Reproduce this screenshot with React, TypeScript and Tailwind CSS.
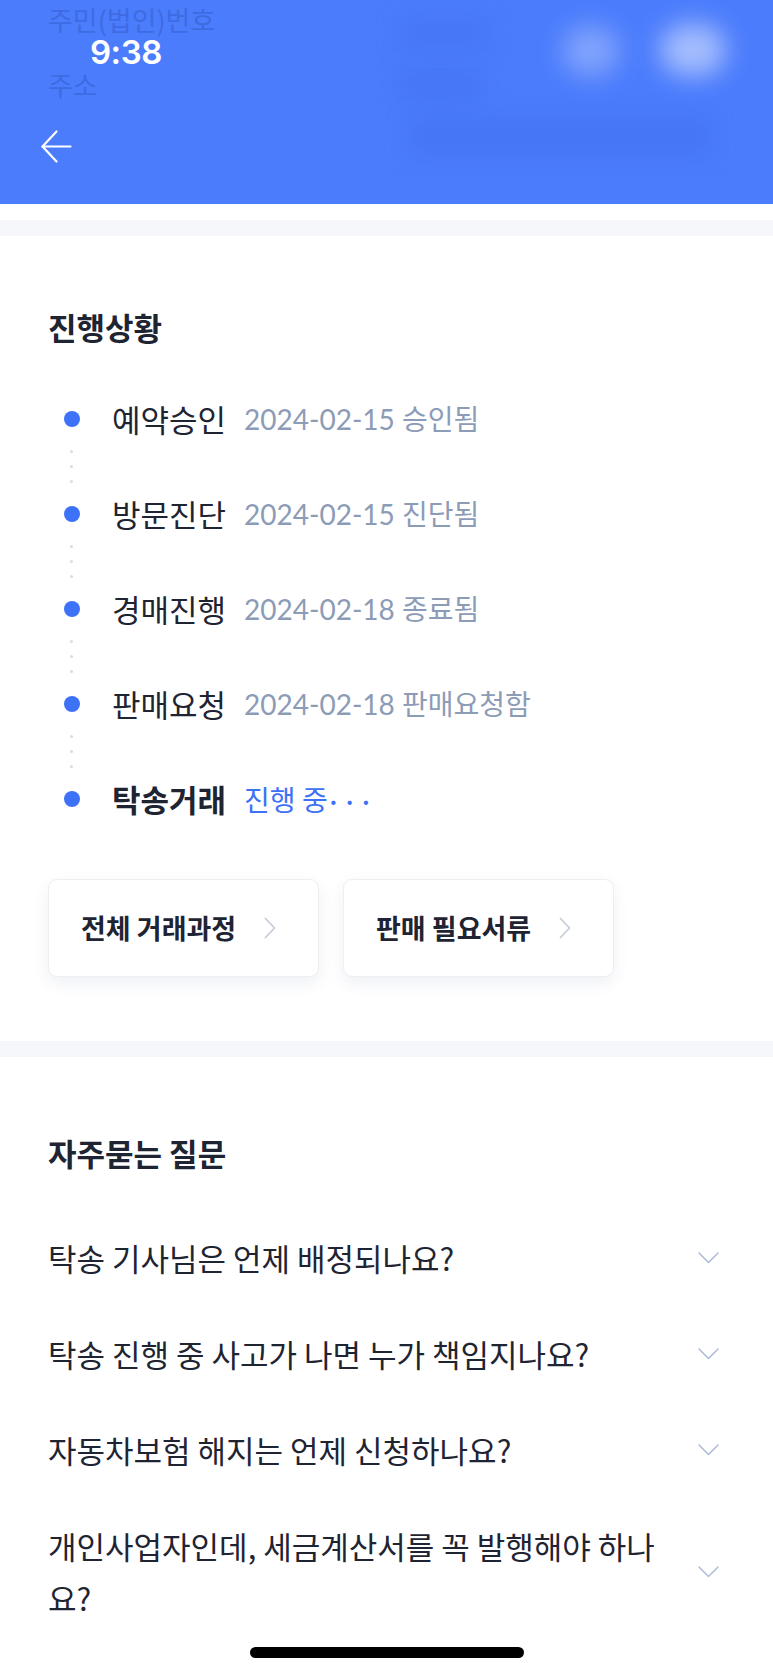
const steps = [
  { label: "예약승인", note: "2024-02-15 승인됨" },
  { label: "방문진단", note: "2024-02-15 진단됨" },
  { label: "경매진행", note: "2024-02-18 종료됨" },
  { label: "판매요청", note: "2024-02-18 판매요청함" },
  { label: "탁송거래", note: "진행 중", current: true },
];

const faqs = [
  "탁송 기사님은 언제 배정되나요?",
  "탁송 진행 중 사고가 나면 누가 책임지나요?",
  "자동차보험 해지는 언제 신청하나요?",
  "개인사업자인데, 세금계산서를 꼭 발행해야 하나요?",
];

function Header() {
  return (
    <header className="relative h-[204px] bg-[#4b7cfc] overflow-hidden">
      <div className="px-[48px] pt-[3px] text-[27px] leading-[34px] text-[#3e6be2]">
        <div>주민(법인)번호</div>
        <div className="mt-[31px]">주소</div>
      </div>

      {/* blurred values */}
      <div className="absolute left-[400px] top-[22px] w-[90px] h-[22px] rounded-md bg-[#3f6ae6]/40 blur-md" />
      <div className="absolute left-[400px] top-[72px] w-[80px] h-[26px] rounded-md bg-[#3f6ae6]/40 blur-md" />
      <div className="absolute left-[410px] top-[120px] w-[300px] h-[34px] rounded-md bg-[#3f6ae6]/40 blur-md" />
      <div className="absolute left-[562px] top-[26px] w-[58px] h-[50px] rounded-full bg-white/30 blur-[13px]" />
      <div className="absolute left-[660px] top-[24px] w-[66px] h-[52px] rounded-full bg-white/50 blur-[13px]" />

      <div className="absolute left-[90px] top-[32px] text-[33px] leading-[40px] font-semibold text-white font-['Inter',sans-serif] tracking-[-0.5px]">
        9:38
      </div>

      <button className="ml-[41px] mt-[28px] block">
        <svg width="31" height="33" viewBox="0 0 31 33" fill="none" stroke="white" strokeWidth="2.2" strokeLinecap="round" strokeLinejoin="round">
          <path d="M15.5 1.5 L1.5 16.5 L15.5 31.5" />
          <path d="M1.5 16.5 H29.5" />
        </svg>
      </button>
    </header>
  );
}

function Progress() {
  return (
    <section className="px-[48px] pt-[71px] pb-[64px]">
      <h2 className="text-[31px] leading-[40px] font-bold text-[#1f2432]">진행상황</h2>

      <div className="mt-[52px]">
        {steps.map((s, i) => (
          <div key={s.label}>
            <div className="flex items-center h-[40px]">
              <div className="w-[47px] flex justify-center">
                <span className="w-[16px] h-[16px] rounded-full bg-[#3d71f6]" />
              </div>
              <span
                className={
                  "ml-[17px] text-[31px] leading-[40px] text-[#1f2432] " +
                  (s.current ? "font-bold" : "")
                }
              >
                {s.label}
              </span>
              {s.current ? (
                <span className="ml-[18px] text-[28px] leading-[40px] text-[#3d71f6]">
                  {s.note}
                  <span className="ml-[2px] tracking-[9px] font-['Lato',sans-serif]">···</span>
                </span>
              ) : (
                <span className="ml-[18px] text-[28px] leading-[40px] text-[#8c9bb6] font-['Lato','Noto_Sans_CJK_KR',sans-serif]">
                  {s.note}
                </span>
              )}
            </div>
            {i < steps.length - 1 && (
              <div className="h-[55px] w-[47px] flex flex-col items-center pt-[11px] gap-[12px]">
                <span className="w-[3px] h-[3px] rounded-full bg-[#d6dbe4]" />
                <span className="w-[3px] h-[3px] rounded-full bg-[#d6dbe4]" />
                <span className="w-[3px] h-[3px] rounded-full bg-[#d6dbe4]" />
              </div>
            )}
          </div>
        ))}
      </div>

      <div className="mt-[60px] flex gap-[24px]">
        {["전체 거래과정", "판매 필요서류"].map((t) => (
          <button
            key={t}
            className="w-[271px] h-[98px] flex items-center pl-[32px] rounded-[9px] border border-[#eceef3] bg-white shadow-[0_6px_16px_rgba(40,60,110,0.08)]"
          >
            <span className="text-[27px] font-bold text-[#1f2432]">{t}</span>
            <svg className="ml-[28px]" width="12" height="22" viewBox="0 0 12 22" fill="none" stroke="#c6cedb" strokeWidth="1.8" strokeLinecap="round" strokeLinejoin="round">
              <path d="M1.5 1.5 L10.5 11 L1.5 20.5" />
            </svg>
          </button>
        ))}
      </div>
    </section>
  );
}

function Faq() {
  return (
    <section className="px-[48px] pt-[76px]">
      <h2 className="text-[31px] leading-[40px] font-bold text-[#1f2432]">자주묻는 질문</h2>
      <div className="mt-[37px]">
        {faqs.map((q) => (
          <div key={q} className="flex items-center py-[22px]">
            <p className="w-[630px] text-[31px] leading-[52px] text-[#1f2432]">{q}</p>
            <svg className="ml-auto mr-[6px]" width="21" height="12" viewBox="0 0 21 12" fill="none" stroke="#aebbd6" strokeWidth="1.5" strokeLinecap="round" strokeLinejoin="round">
              <path d="M1 1 L10.5 10.5 L20 1" />
            </svg>
          </div>
        ))}
      </div>
    </section>
  );
}

export default function App() {
  return (
    <div className="relative min-h-[1673px] bg-white overflow-hidden font-['Noto_Sans_CJK_KR',sans-serif]">
      <Header />
      <div className="h-[16px] bg-white" />
      <div className="h-[16px] bg-[#f6f7fa]" />
      <Progress />
      <div className="h-[16px] bg-[#f6f7fa]" />
      <Faq />
      <div className="absolute left-[250px] top-[1647px] w-[274px] h-[11px] rounded-full bg-black" />
    </div>
  );
}
